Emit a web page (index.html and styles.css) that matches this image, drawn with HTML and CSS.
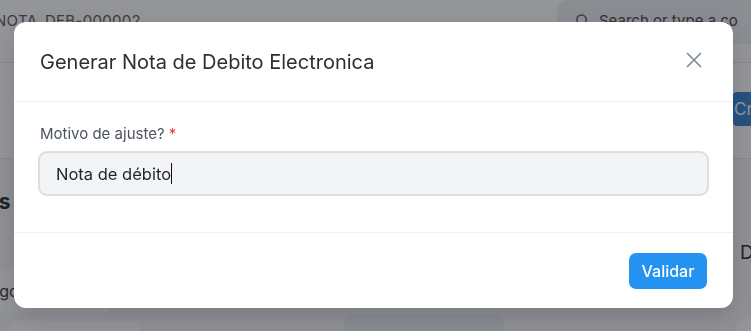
FILE: index.html
```html
<!DOCTYPE html>
<html lang="es">
<head>
<meta charset="utf-8">
<title>Generar Nota de Debito Electronica</title>
<link rel="stylesheet" href="styles.css">
</head>
<body>
<div class="page">
  <header class="topbar">
    <div class="doc-id">NOTA_DEB-000002</div>
    <div class="search">
      <svg class="search-icon" width="15" height="15" viewBox="0 0 16 16"><circle cx="7" cy="7" r="5" fill="none" stroke="#555" stroke-width="1.6"/><path d="M11 11l3.5 3.5" stroke="#555" stroke-width="1.6" stroke-linecap="round"/></svg>
      <span>Search or type a co</span>
    </div>
  </header>
  <div class="toolbar">
    <button class="create-btn">Cre</button>
  </div>
  <div class="content">
    <div class="col-left">
      <h2 class="sec-title">Notas</h2>
      <div class="card">Pago</div>
      <div class="card small"></div>
    </div>
    <div class="col-mid">
      <div class="card wide"></div>
    </div>
    <div class="col-right">
      <div class="sec-title2">D</div>
      <div class="card"></div>
    </div>
  </div>
</div>

<div class="overlay">
  <div class="modal">
    <div class="modal-header">
      <h3 class="modal-title">Generar Nota de Debito Electronica</h3>
      <button class="close" aria-label="Cerrar">
        <svg width="16" height="16" viewBox="0 0 16 16"><path d="M1.5 1.5l13 13M14.5 1.5l-13 13" stroke="#7b8794" stroke-width="1.6" stroke-linecap="round"/></svg>
      </button>
    </div>
    <div class="modal-body">
      <label class="field-label">Motivo de ajuste? <span class="req">*</span></label>
      <div class="field-input">Nota de débito<span class="caret"></span></div>
    </div>
    <div class="modal-footer">
      <button class="primary">Validar</button>
    </div>
  </div>
</div>
</body>
</html>
```
FILE: styles.css
```css
* { box-sizing: border-box; }
html, body { margin: 0; padding: 0; }
body {
  width: 751px;
  height: 331px;
  overflow: hidden;
  font-family: Inter, "Noto Sans", sans-serif;
  background: #ffffff;
  color: #1f2937;
}
.page {
  width: 751px;
  height: 331px;
  overflow: hidden;
  background: #f7f7f8;
}
.topbar {
  height: 63px;
  display: flex;
  justify-content: space-between;
  align-items: flex-start;
  background: #ffffff;
  border-bottom: 1px solid #e5e7eb;
}
.doc-id {
  margin-left: -5px;
  margin-top: 11px;
  font-size: 15px;
  color: #555;
  letter-spacing: 0.3px;
  white-space: nowrap;
}
.search {
  width: 194px;
  height: 44px;
  display: flex;
  align-items: center;
  gap: 9px;
  padding-left: 18px;
  padding-bottom: 4px;
  background: #eef0f2;
  border-radius: 10px 0 0 10px;
  font-size: 15px;
  color: #444;
  white-space: nowrap;
  overflow: hidden;
}
.search-icon { flex: none; }
.toolbar {
  height: 96px;
  display: flex;
  justify-content: flex-end;
  padding-top: 29px;
  background: #ffffff;
  border-bottom: 1px solid #e5e7eb;
}
.create-btn {
  width: 60px;
  height: 34px;
  margin-right: -42px;
  border: 0;
  background: #2f7fd0;
  color: #fff;
  font-family: inherit;
  font-size: 17px;
  text-align: left;
  padding-left: 1px;
  border-radius: 4px 0 0 4px;
  white-space: nowrap;
}
.content {
  display: flex;
  justify-content: space-between;
  padding-top: 30px;
}
.col-left { width: 160px; margin-left: -50px; }
.sec-title { margin: 0; font-size: 21px; font-weight: 700; color: #222; }
.card {
  margin-top: 55px;
  height: 44px;
  background: #fff;
  border-radius: 8px;
  font-size: 16px;
  padding: 12px 0 0 30px;
  color: #333;
}
.card.small { margin-top: 8px; height: 40px; width: 130px; margin-left: 60px; }
.col-mid { width: 160px; padding-top: 125px; }
.card.wide { margin-top: 0; height: 40px; background: #eceef0; }
.col-right { width: 40px; margin-right: -26px; padding-top: 52px; }
.sec-title2 { font-size: 19px; color: #222; margin-left: 3px; }

.overlay {
  position: fixed;
  inset: 0;
  background: rgba(30, 34, 42, 0.48);
  padding: 22px 18px 0 14px;
}
.modal {
  width: 719px;
  height: 286px;
  background: #ffffff;
  border-radius: 12px;
  box-shadow: 0 10px 25px rgba(0, 0, 0, 0.15);
  display: flex;
  flex-direction: column;
}
.modal-header {
  height: 80px;
  display: flex;
  align-items: center;
  justify-content: space-between;
  padding: 0 31px 0 26px;
  border-bottom: 1px solid #edeef0;
}
.modal-title {
  margin: 0;
  font-size: 20px;
  font-weight: 400;
  color: #2b2f36;
}
.close {
  border: 0;
  background: none;
  padding: 0;
  width: 16px;
  height: 16px;
  display: flex;
  margin-bottom: 3px;
}
.modal-body {
  height: 131px;
  padding: 22px 24px 0 24px;
  border-bottom: 1px solid #f0f1f3;
}
.field-label {
  display: block;
  font-size: 15px;
  color: #4b5260;
  margin-left: 2px;
  line-height: 20px;
}
.req { color: #e53e3e; }
.field-input {
  margin-top: 7px;
  height: 45px;
  border: 2px solid #dcdee2;
  border-radius: 9px;
  background: #f3f4f6;
  display: flex;
  align-items: center;
  padding-left: 16px;
  font-size: 16.5px;
  color: #1f2328;
}
.caret {
  display: inline-block;
  width: 1px;
  height: 21px;
  background: #111;
}
.modal-footer {
  flex: 1;
  display: flex;
  justify-content: flex-end;
  align-items: flex-start;
  padding: 20px 26px 0 0;
}
.primary {
  width: 78px;
  height: 36px;
  border: 0;
  border-radius: 7px;
  background: #2492f0;
  color: #ffffff;
  font-family: inherit;
  font-size: 16px;
  font-weight: 500;
}
```
